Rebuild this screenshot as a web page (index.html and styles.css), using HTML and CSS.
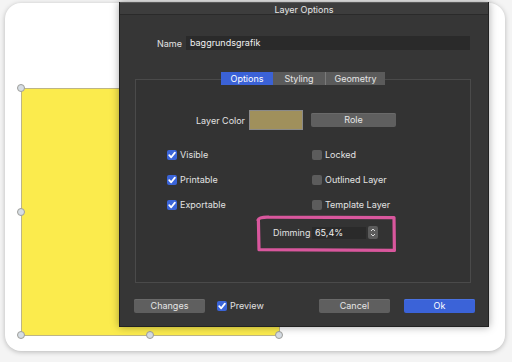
FILE: index.html
```html
<!DOCTYPE html>
<html>
<head>
<meta charset="utf-8">
<link rel="stylesheet" href="styles.css">
</head>
<body>
<div class="card">
  <div class="shape"></div>
  <span class="handle" style="left:12px;top:81px"></span>
  <span class="handle" style="left:12px;top:205px"></span>
  <span class="handle" style="left:12px;top:328px"></span>
  <span class="handle" style="left:141px;top:328px"></span>
  <span class="handle" style="left:270px;top:328px"></span>

  <div class="dialog">
    <div class="titlebar">Layer Options</div>
    <div class="name-row">
      <span class="lbl">Name</span>
      <div class="input">baggrundsgrafik</div>
    </div>
    <div class="tabs-wrap">
      <div class="tabs">
        <span class="tab active">Options</span>
        <span class="tab">Styling</span>
        <span class="tab sep">Geometry</span>
      </div>
      <div class="group">
        <div class="color-row">
          <span class="color-lbl">Layer Color</span>
          <span class="swatch"></span>
          <span class="btn role">Role</span>
        </div>
        <div class="checks">
          <label class="chk"><span class="box on"><svg viewBox="0 0 10 10"><path d="M2.2 5.2 L4.2 7.3 L7.9 2.6" /></svg></span>Visible</label>
          <label class="chk"><span class="box"></span>Locked</label>
          <label class="chk"><span class="box on"><svg viewBox="0 0 10 10"><path d="M2.2 5.2 L4.2 7.3 L7.9 2.6" /></svg></span>Printable</label>
          <label class="chk"><span class="box"></span>Outlined Layer</label>
          <label class="chk"><span class="box on"><svg viewBox="0 0 10 10"><path d="M2.2 5.2 L4.2 7.3 L7.9 2.6" /></svg></span>Exportable</label>
          <label class="chk"><span class="box"></span>Template Layer</label>
        </div>
        <div class="dim-row">
          <span class="dim-lbl">Dimming</span>
          <span class="field">65,4%</span>
          <span class="stepper"><svg viewBox="0 0 10 13"><path d="M3 5 L5 3 L7 5 M3 8 L5 10 L7 8" /></svg></span>
        </div>
      </div>
    </div>
    <div class="footer">
      <span class="btn">Changes</span>
      <label class="chk preview"><span class="box on"><svg viewBox="0 0 10 10"><path d="M2.2 5.2 L4.2 7.3 L7.9 2.6" /></svg></span>Preview</label>
      <span class="btn cancel">Cancel</span>
      <span class="btn ok">Ok</span>
    </div>
    <svg class="highlight" viewBox="0 0 144 41">
      <path d="M3 6 C4 3.5 8 3 14 3.2 L139 3.6 L139.4 36.4 L4 35.6 L3.4 6" />
    </svg>
  </div>
</div>
</body>
</html>
```

FILE: styles.css
```css
* { box-sizing: border-box; }
html, body {
  margin: 0;
  padding: 0;
  width: 512px;
  height: 362px;
  overflow: hidden;
  background: #f4f4f4;
  font-family: "Inter", "Open Sans", sans-serif;
  font-size: 9px;
  color: #e2e2e2;
}
body { padding: 3px 0 0 5px; }

.card {
  position: relative;
  width: 500px;
  height: 348px;
  background: #fff;
  border-radius: 16px;
  box-shadow: 0 1px 5px rgba(0,0,0,0.25);
}

.shape {
  position: absolute;
  left: 16px;
  top: 85px;
  width: 259px;
  height: 248px;
  background: #fbeb4d;
  border: 1px solid #bdb585;
}
.handle {
  position: absolute;
  width: 8px;
  height: 8px;
  border-radius: 50%;
  background: #d6dde4;
  border: 1px solid #9e9e9a;
}

.dialog {
  position: absolute;
  left: 114px;
  top: -1px;
  width: 370px;
  height: 325px;
  background: #363636;
  display: flex;
  flex-direction: column;
  box-shadow: 0 0 8px rgba(0,0,0,0.35);
  border: 1px solid #222;
  border-top: none;
}
.titlebar {
  height: 13px;
  line-height: 13px;
  text-align: center;
  background: #3d3d3d;
  border-top: 1px solid #5a5a5a;
  border-bottom: 1px solid #2a2a2a;
  color: #e6e6e6;
}

.name-row {
  display: flex;
  align-items: center;
  gap: 4px;
  margin-top: 21px;
  padding-left: 37px;
}
.input {
  width: 284px;
  height: 14px;
  line-height: 14px;
  padding-left: 4px;
  background: #2a2a2a;
  color: #f0f0f0;
}

.tabs-wrap {
  margin-top: 22px;
  padding: 0 17px 0 15px;
}
.tabs {
  position: relative;
  z-index: 1;
  display: flex;
  justify-content: center;
  height: 13px;
}
.tab {
  height: 13px;
  line-height: 13px;
  background: #5b5b5b;
  color: #e6e6e6;
  text-align: center;
  width: 52px;
}
.tab.active { background: #3b62d6; color: #fff; }
.tab.sep {
  width: 60px;
  border-left: 1px solid #7a7a7a;
  background-clip: border-box;
  box-shadow: inset 1px 0 0 #5b5b5b;
}
.group {
  margin-top: -6px;
  height: 204px;
  border: 1px solid #4a4a4a;
  background: #333333;
  padding-top: 30px;
}

.color-row {
  display: flex;
  align-items: center;
  height: 20px;
}
.color-lbl {
  width: 109px;
  text-align: right;
  margin-right: 4px;
}
.swatch {
  width: 54px;
  height: 20px;
  background: #a0905c;
  border: 1px solid #8a8a8a;
  margin-right: 8px;
}
.btn {
  display: block;
  width: 71px;
  height: 14px;
  line-height: 14px;
  text-align: center;
  background: #5f5f5f;
  color: #e6e6e6;
  border-radius: 2px;
  box-shadow: inset 0 1px 0 #6a6a6a;
}
.btn.role { width: 85px; }

.checks {
  display: grid;
  grid-template-columns: 145px 1fr;
  grid-auto-rows: 10px;
  row-gap: 15px;
  margin-top: 20px;
  padding-left: 31px;
}
.chk {
  display: flex;
  align-items: center;
  gap: 3px;
  height: 10px;
  line-height: 10px;
  white-space: nowrap;
}
.box {
  width: 10px;
  height: 10px;
  border-radius: 2px;
  background: #5c5c5c;
  flex: none;
  display: flex;
}
.box.on { background: #3a64d8; }
.box svg { width: 10px; height: 10px; }
.box path {
  fill: none;
  stroke: #fff;
  stroke-width: 1.8;
  stroke-linecap: round;
  stroke-linejoin: round;
}

.dim-row {
  display: flex;
  align-items: center;
  margin-top: 16px;
  padding-left: 137px;
  height: 13px;
}
.dim-lbl { width: 39px; }
.field {
  width: 54px;
  height: 12px;
  line-height: 12px;
  background: #2a2a2a;
  padding-left: 3px;
  color: #f0f0f0;
  margin-right: 2px;
}
.stepper {
  width: 10px;
  height: 13px;
  background: #5c5c5c;
  border-radius: 2px;
  display: flex;
}
.stepper svg { width: 10px; height: 13px; }
.stepper path { fill: none; stroke: #dcdcdc; stroke-width: 1; }

.footer {
  display: flex;
  align-items: center;
  margin-top: 16px;
  padding: 0 13px 0 14px;
}
.preview { margin-left: 12px; }
.cancel { margin-left: auto; }
.ok {
  margin-left: 14px;
  background: #3b63d8;
  color: #fff;
  box-shadow: inset 0 1px 0 #4a72e2;
}

.highlight {
  position: absolute;
  left: 135px;
  top: 212px;
  width: 144px;
  height: 41px;
  overflow: visible;
}
.highlight path {
  fill: none;
  stroke: #d9579d;
  stroke-width: 3.2;
  stroke-linejoin: round;
  stroke-linecap: round;
}
```
